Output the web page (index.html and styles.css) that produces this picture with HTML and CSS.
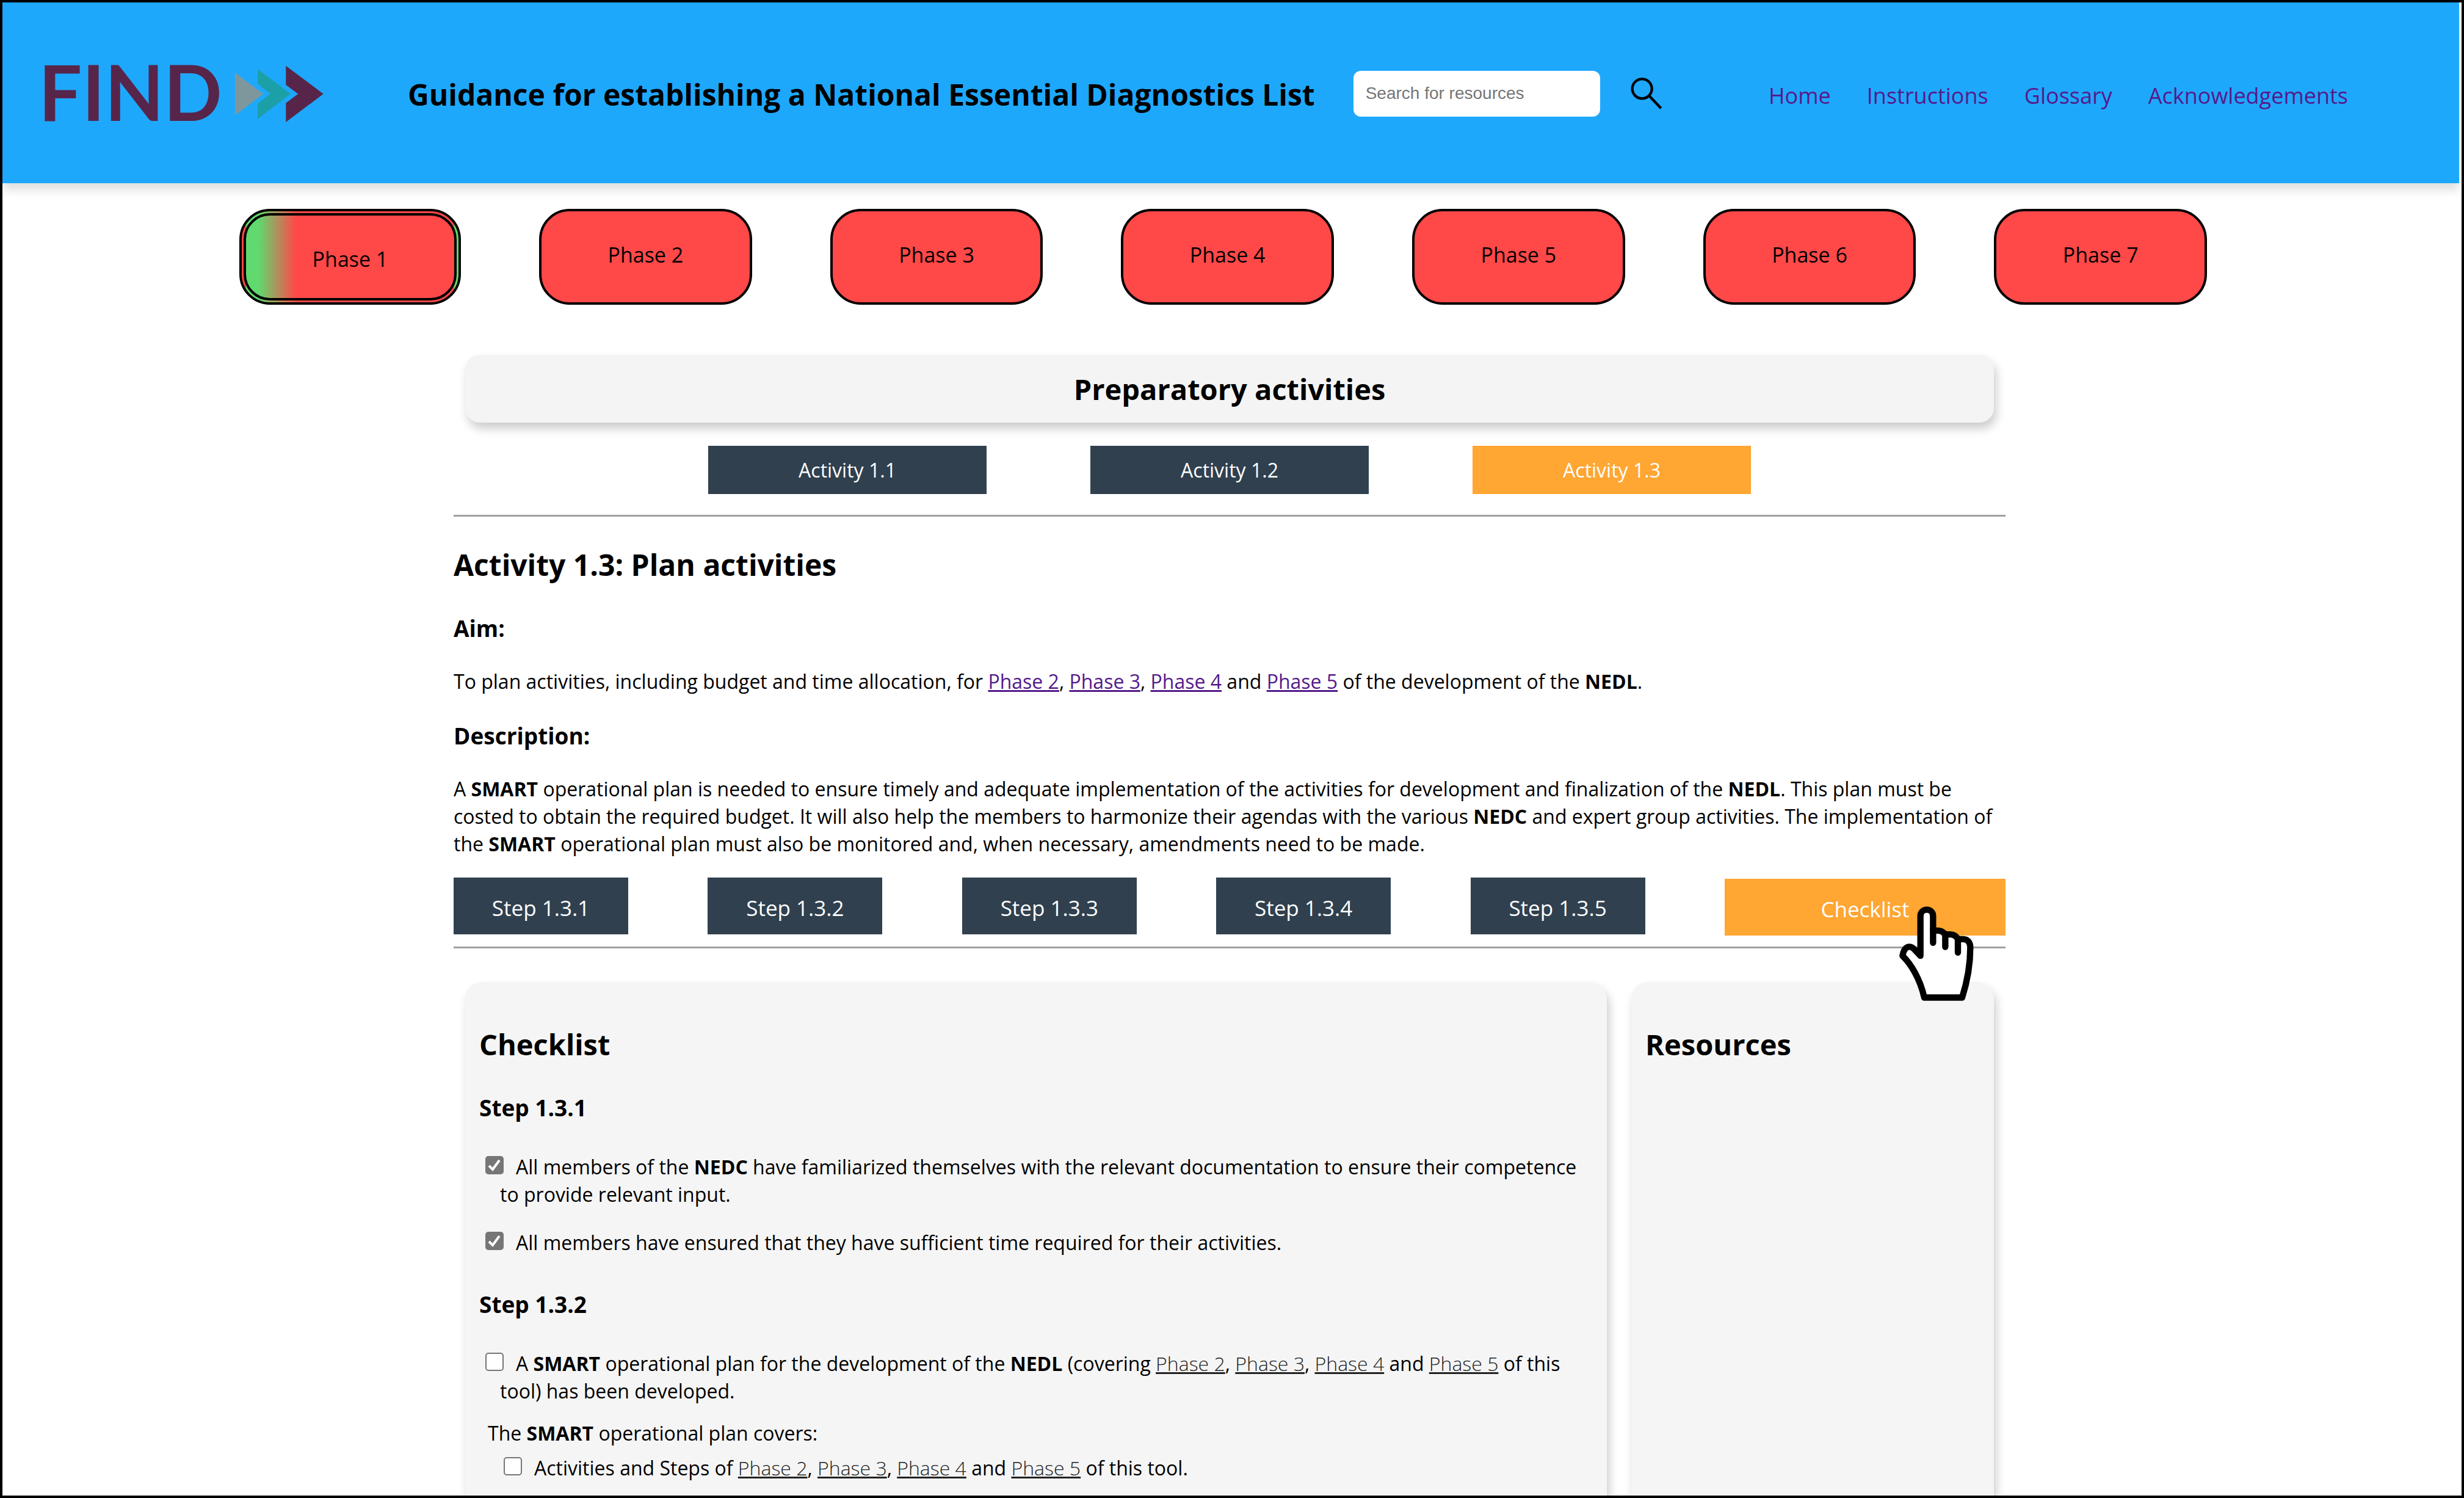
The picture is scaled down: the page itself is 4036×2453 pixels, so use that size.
FILE: index.html
```html
<!DOCTYPE html>
<html lang="en">
<head>
<meta charset="utf-8">
<meta name="viewport" content="width=device-width, initial-scale=1">
<title>Guidance for establishing a National Essential Diagnostics List</title>
<link rel="stylesheet" href="styles.css">
</head>
<body>
<div class="page">
  <header class="header">
    <a class="logo" href="#" aria-label="FIND">
      <svg viewBox="72 80 1372 280" aria-hidden="true">
        <text class="logo-word" x="38" y="354">FIND</text>
        <path fill="#7e979d" d="M1006 116 1146 221 1006 326Z"/>
        <path fill="#1ca0a8" d="M1118 98 1281 221 1118 344V268L1181 221 1118 171Z"/>
        <path fill="#57254a" d="M1257 82 1442 221 1257 360V266L1317 221 1257 176Z"/>
      </svg>
    </a>
    <h1 class="title">Guidance for establishing a National Essential Diagnostics List</h1>
    <form class="search">
      <input class="search-input" type="search" placeholder="Search for resources" aria-label="Search for resources">
      <button class="search-button" type="button" aria-label="Search">
        <svg viewBox="95 80 153 156" aria-hidden="true" fill="none" stroke="#000" stroke-width="13">
          <circle cx="151" cy="135" r="48"/>
          <path d="M187 171 244 231"/>
        </svg>
      </button>
    </form>
    <nav class="site-nav" aria-label="Site">
      <a href="#">Home</a>
      <a href="#">Instructions</a>
      <a href="#">Glossary</a>
      <a href="#">Acknowledgements</a>
    </nav>
  </header>

  <nav class="phases" aria-label="Phases">
    <a class="phase phase-current" href="#">Phase 1</a>
    <a class="phase" href="#">Phase 2</a>
    <a class="phase" href="#">Phase 3</a>
    <a class="phase" href="#">Phase 4</a>
    <a class="phase" href="#">Phase 5</a>
    <a class="phase" href="#">Phase 6</a>
    <a class="phase" href="#">Phase 7</a>
  </nav>

  <main class="main">
    <h2 class="banner">Preparatory activities</h2>
    <div class="activities">
      <button class="tab" type="button">Activity 1.1</button>
      <button class="tab" type="button">Activity 1.2</button>
      <button class="tab tab-current" type="button">Activity 1.3</button>
    </div>
    <hr class="rule">

    <section class="intro">
      <h2 class="intro-title">Activity 1.3: Plan activities</h2>
      <h3 class="subhead">Aim:</h3>
      <p class="text">To plan activities, including budget and time allocation, for <a href="#">Phase 2</a>, <a href="#">Phase 3</a>, <a href="#">Phase 4</a> and <a href="#">Phase 5</a> of the development of the <b>NEDL</b>.</p>
      <h3 class="subhead">Description:</h3>
      <p class="text">A <b>SMART</b> operational plan is needed to ensure timely and adequate implementation of the activities for development and finalization of the <b>NEDL</b>. This plan must be costed to obtain the required budget. It will also help the members to harmonize their agendas with the various <b>NEDC</b> and expert group activities. The implementation of the <b>SMART</b> operational plan must also be monitored and, when necessary, amendments need to be made.</p>
    </section>

    <div class="steps">
      <button class="step" type="button">Step 1.3.1</button>
      <button class="step" type="button">Step 1.3.2</button>
      <button class="step" type="button">Step 1.3.3</button>
      <button class="step" type="button">Step 1.3.4</button>
      <button class="step" type="button">Step 1.3.5</button>
      <div class="step-wide">
        <button class="step step-current" type="button">Checklist</button>
        <svg class="pointer" viewBox="94 77 366 464" aria-hidden="true" fill="#fff" stroke="#000" stroke-width="31" stroke-linecap="round" stroke-linejoin="round">
          <path d="M198 320V125C198 83 260 83 260 125V196H285C302 196 310 203 320 215H345C362 215 374 224 382 238H408C432 238 443 256 443 280C443 365 430 440 403 525H217C195 430 150 358 110 320C118 272 145 268 165 285Z"/>
          <path fill="none" d="M260 190V256M320 212V276M382 236V304"/>
        </svg>
      </div>
    </div>
    <hr class="rule">

    <div class="panels">
      <section class="panel panel-checklist">
        <h2 class="panel-title">Checklist</h2>
        <h3 class="panel-subhead">Step 1.3.1</h3>
        <ul class="checks">
          <li><label><input type="checkbox" checked>All members of the <b>NEDC</b> have familiarized themselves with the relevant documentation to ensure their competence to provide relevant input.</label></li>
          <li><label><input type="checkbox" checked>All members have ensured that they have sufficient time required for their activities.</label></li>
        </ul>
        <h3 class="panel-subhead">Step 1.3.2</h3>
        <ul class="checks">
          <li>
            <label><input type="checkbox">A <b>SMART</b> operational plan for the development of the <b>NEDL</b> (covering <a href="#">Phase 2</a>, <a href="#">Phase 3</a>, <a href="#">Phase 4</a> and <a href="#">Phase 5</a> of this tool) has been developed.</label>
            <p class="covers">The <b>SMART</b> operational plan covers:</p>
            <ul class="subchecks">
              <li><label><input type="checkbox">Activities and Steps of <a href="#">Phase 2</a>, <a href="#">Phase 3</a>, <a href="#">Phase 4</a> and <a href="#">Phase 5</a> of this tool.</label></li>
            </ul>
          </li>
        </ul>
      </section>
      <section class="panel panel-resources">
        <h2 class="panel-title">Resources</h2>
      </section>
    </div>
  </main>
</div>
</body>
</html>
```
FILE: styles.css
```css
* { box-sizing: border-box; }

body {
  margin: 0;
  background: #fff;
  color: #000;
  font-family: "Open Sans", "Noto Sans", sans-serif;
  font-size: 32px;
  line-height: 45px;
}

h1, h2, h3, p, ul { margin: 0; padding: 0; }
ul { list-style: none; }
b { font-weight: 700; }
button { border: 0; font-family: inherit; cursor: pointer; }

.page {
  display: flex;
  flex-direction: column;
  height: 100vh;
  overflow: hidden;
  border: 4px solid #000;
  padding-right: 4px;
}

/* Header */
.header {
  flex: none;
  display: flex;
  align-items: center;
  height: 296px;
  padding: 2px 182px 0 70px;
  background: #1ea8fc;
  box-shadow: 0 10px 16px rgba(0, 0, 0, .14);
}
.logo { flex: none; margin-right: 137px; }
.logo svg { display: block; width: 457px; height: 93px; overflow: visible; }
.logo-word { font: 700 378px Lato, sans-serif; fill: #57254a; }
.title { padding-top: 4px; font-size: 48px; font-weight: 700; line-height: 64px; white-space: nowrap; }
.search { display: flex; align-items: center; gap: 50px; margin-left: 63px; }
.search-input {
  width: 404px;
  height: 75px;
  padding: 0 20px;
  border: 0;
  border-radius: 12px;
  background: #fff;
  font: 28px "Liberation Sans", Arial, sans-serif;
}
.search-input::placeholder { color: #757575; opacity: 1; }
.search-button { padding: 0; background: none; }
.search-button svg { display: block; width: 51px; height: 52px; }
.site-nav {
  display: flex;
  gap: 59px;
  margin-left: auto;
  padding-top: 6px;
  font-size: 36px;
}
.site-nav a { color: #551a8b; text-decoration: none; }

/* Phases */
.phases {
  flex: none;
  display: flex;
  gap: 128px;
  margin-top: 42px;
  padding: 0 413px 0 388px;
}
.phase {
  flex: 1;
  height: 157px;
  padding-top: 48px;
  border: 4px solid #000;
  border-radius: 50px;
  background: #ff4848;
  color: #000;
  font-size: 34px;
  line-height: 46px;
  text-align: center;
  text-decoration: none;
}
.phase-current {
  flex: 0 0 363px;
  border: 11px double #000;
  background: linear-gradient(to right, #60d96e 6%, #ff4848 24%);
}

/* Main column */
.main {
  flex: 1;
  display: flex;
  flex-direction: column;
  width: 100%;
  max-width: 2546px;
  min-height: 0;
  margin: 82px auto 0;
  padding-right: 4px;
}
.banner {
  flex: none;
  margin: 0 19px;
  padding: 25px 24px 23px;
  border-radius: 24px;
  background: #f4f4f4;
  box-shadow: 4px 10px 16px rgba(0, 0, 0, .2);
  font-size: 47px;
  font-weight: 700;
  line-height: 63px;
  text-align: center;
}
.activities { display: flex; justify-content: center; gap: 170px; margin-top: 38px; }
.tab {
  width: 456px;
  height: 79px;
  background: #30404f;
  color: #fff;
  font-size: 32px;
}
.rule { flex: none; width: 100%; height: 3px; margin: 34px 0 0; border: 0; background: #a0a0a0; }
.intro-title { margin-top: 47px; font-size: 48px; font-weight: 700; line-height: 64px; }
.subhead { margin: 42px 0 39px; font-size: 37px; font-weight: 700; line-height: 50px; }
.intro-title + .subhead { margin-top: 47px; }
.text a { color: #551a8b; }

/* Steps */
.steps { display: flex; justify-content: space-between; align-items: flex-start; margin-top: 33px; }
.step {
  width: 286px;
  height: 93px;
  padding: 5px 0 0;
  background: #30404f;
  color: #fff;
  font-size: 35px;
}
.step-wide { position: relative; width: 460px; padding-top: 2px; }
.step-current { width: 100%; }
.tab-current, .step-current { background: #ffa633; }
.steps + .rule { margin-top: 18px; }
.pointer { position: absolute; z-index: 1; left: 286px; top: 47px; width: 122px; height: 155px; }

/* Panels */
.panels { flex: 1; display: flex; gap: 40px; min-height: 0; margin-top: 55px; padding: 0 19px; }
.panel {
  padding: 70px 24px 0 23px;
  border-radius: 28px 28px 0 0;
  background: #f5f5f5;
  box-shadow: 4px 10px 16px rgba(0, 0, 0, .2);
}
.panel-checklist { flex: 1; }
.panel-resources { flex: 0 0 594px; }
.panel-title { margin-bottom: 47px; font-size: 47px; font-weight: 700; line-height: 64px; }
.panel-subhead { margin-bottom: 49px; font-size: 37px; font-weight: 700; line-height: 50px; }
.checks { display: flex; flex-direction: column; gap: 34px; margin-bottom: 54px; }
.checks label { display: block; padding-left: 34px; text-indent: -24px; }
.checks input {
  appearance: none;
  width: 30px;
  height: 30px;
  margin: 0 20px 0 0;
  border: 2px solid #767676;
  border-radius: 5px;
  background: #fff;
  vertical-align: baseline;
}
.checks input:checked {
  background: #767676 url("data:image/svg+xml,%3Csvg xmlns='http://www.w3.org/2000/svg' viewBox='0 0 26 26'%3E%3Cpath d='M4 14l6 6L21 5' fill='none' stroke='%23fff' stroke-width='4'/%3E%3C/svg%3E") center / contain no-repeat;
}
.checks a { color: #222; font-weight: 300; }
.covers { margin-top: 24px; padding-left: 14px; }
.subchecks { margin-top: 12px; padding-left: 30px; }
```
